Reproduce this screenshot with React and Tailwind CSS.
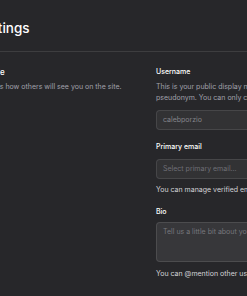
export default function App() {
  return (
    <div className="w-[247px] h-[296px] overflow-hidden bg-[#27272a] font-['Inter',sans-serif] antialiased">
      <div className="-ml-[18px] w-[520px]">
        <div className="-ml-[5px] pt-[20px] pb-[15px] text-[13.5px] leading-[16px] font-medium text-white">Settings</div>
        <div className="h-px bg-white/10"></div>
        <div className="flex pt-[15px]">
          <div className="w-[174px] shrink-0">
            <div className="-ml-[2px] text-[8px] leading-[10px] font-medium text-white">Profile</div>
            <div className="mt-[5px] text-[7px] leading-[10.5px] text-[#a1a1aa]">This is how others will see you on the site.</div>
          </div>
          <div className="w-[215px] shrink-0 text-[7px]">
            <div className="leading-[10px] font-medium text-white">Username</div>
            <div className="mt-[5px] leading-[10.5px] text-[#a1a1aa]">
              This is your public display name. It can be your real name or a pseudonym. You can only change this once every 30 days.
            </div>
            <div className="mt-[7px] h-[20px] rounded-[4px] border border-white/10 bg-white/[0.05] flex items-center px-[6px] text-[#85858b] leading-[10px]">calebporzio</div>
            <div className="mt-[12px] leading-[10px] font-medium text-white">Primary email</div>
            <div className="mt-[7px] h-[20px] rounded-[4px] border border-white/10 bg-white/[0.05] flex items-center px-[6px] text-[#6f6f76] leading-[10px]">Select primary email...</div>
            <div className="mt-[6px] leading-[10px] text-[#d4d4d8]">You can manage verified email addresses in your email settings.</div>
            <div className="mt-[12px] leading-[10px] font-medium text-white">Bio</div>
            <div className="mt-[5px] h-[40px] rounded-[4px] border border-white/10 bg-white/[0.08] px-[6px] pt-[4px] text-[#76767c] leading-[10px]">Tell us a little bit about yourself</div>
            <div className="mt-[7px] leading-[10px] text-[#d4d4d8]">You can @mention other users and organizations to link to them.</div>
          </div>
        </div>
      </div>
    </div>
  );
}
